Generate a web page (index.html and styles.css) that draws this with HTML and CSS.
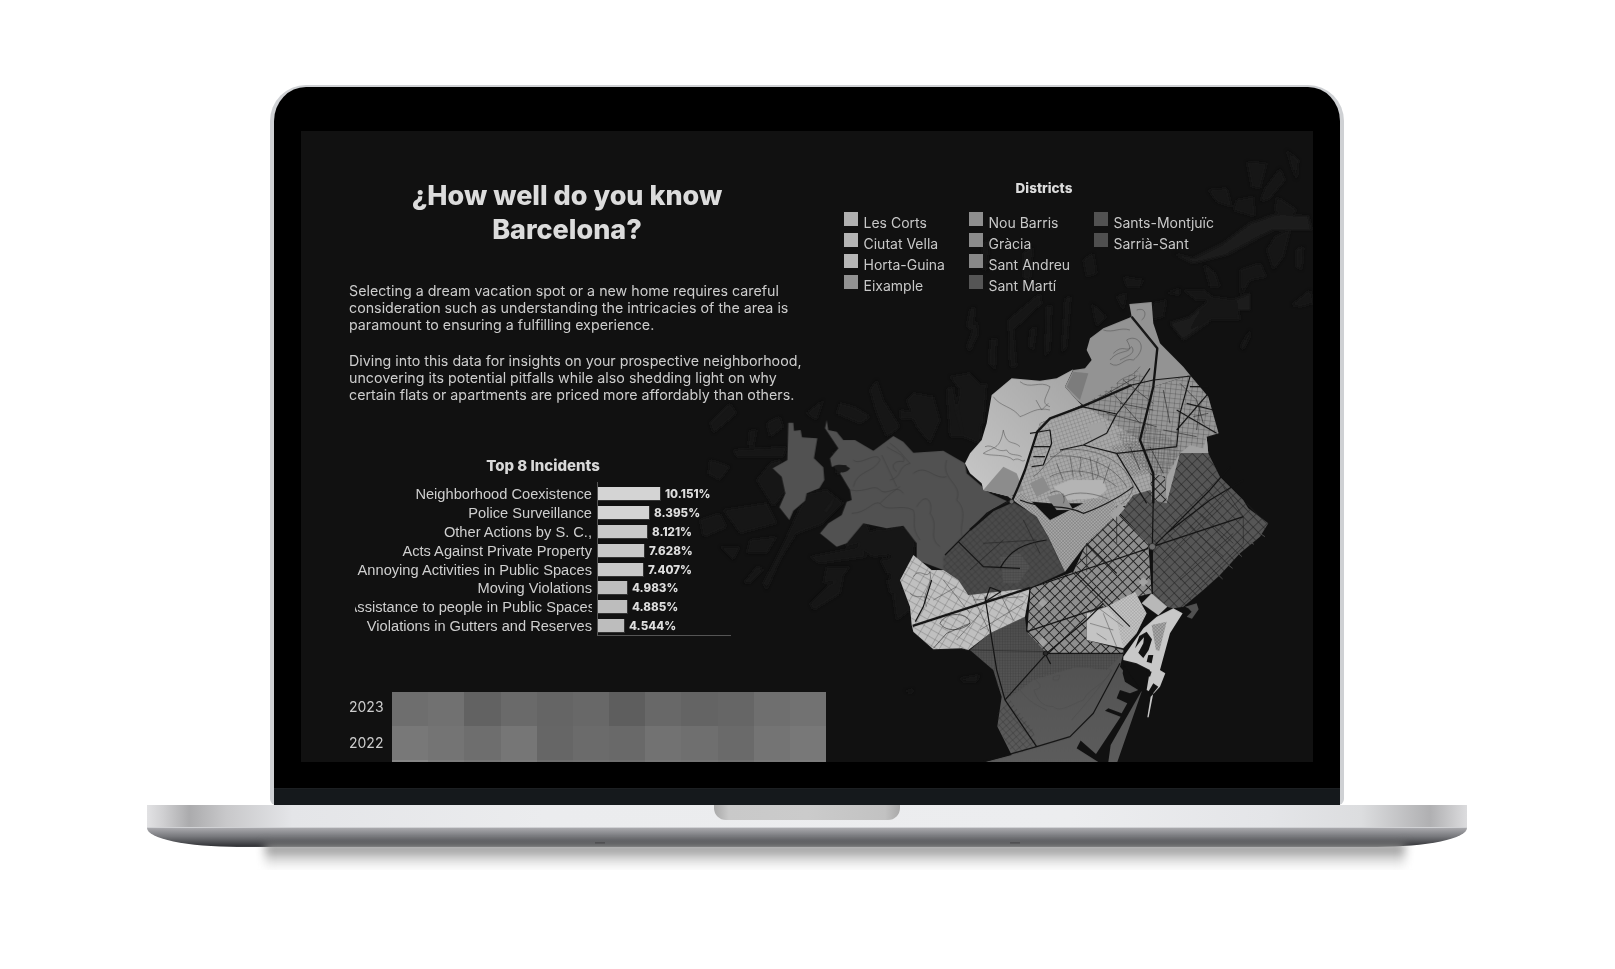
FILE: index.html
```html
<!DOCTYPE html>
<html lang="en">
<head>
  <meta charset="UTF-8" />
  <meta name="viewport" content="width=device-width, initial-scale=1.0"/>
  <title>How well do you know Barcelona?</title>
  <link rel="stylesheet" href="styles.css">
</head>
<body>
  <div class="laptop">
    <div class="lid">
      <div class="screen">

        <!-- map fills the whole screen, viewBox is in page pixels -->
        <svg class="map" viewBox="301 131 1012 631" aria-hidden="true">
          <defs>
            <filter id="soft" x="-5%" y="-5%" width="110%" height="110%"><feGaussianBlur stdDeviation="1.5"/></filter>
            <pattern id="pCross" width="22" height="22" patternUnits="userSpaceOnUse" patternTransform="rotate(-44)">
              <path d="M0 0H22M0 0V22" stroke="#1b1b1b" stroke-width="5" fill="none"/>
            </pattern>
            <pattern id="pMarti" width="22" height="22" patternUnits="userSpaceOnUse" patternTransform="rotate(-44)">
              <path d="M0 0H22M0 0V22" stroke="#1f1f1f" stroke-width="3.4" fill="none"/>
            </pattern>
            <pattern id="pFine" width="7" height="7" patternUnits="userSpaceOnUse" patternTransform="rotate(-44)">
              <path d="M0 0H7M0 0V7" stroke="#5a5a5a" stroke-width="1.5" fill="none"/>
            </pattern>
            <pattern id="pCorts" width="15" height="15" patternUnits="userSpaceOnUse" patternTransform="rotate(-42)">
              <path d="M0 0H15M0 0V15" stroke="#2b2b2b" stroke-width="1.7" fill="none"/>
            </pattern>
            <pattern id="pSants" width="8" height="8" patternUnits="userSpaceOnUse">
              <path d="M0 0H8M0 0V8" stroke="#303030" stroke-width="1.3" fill="none"/>
            </pattern>
            <pattern id="pWest" width="25" height="21" patternUnits="userSpaceOnUse" patternTransform="rotate(30)">
              <path d="M0 0H25M0 0V21" stroke="#4a4a4a" stroke-width="1.6" fill="none"/>
            </pattern>
            <pattern id="pHorta" width="11" height="11" patternUnits="userSpaceOnUse" patternTransform="rotate(-18)">
              <path d="M0 0H11M0 0V11" stroke="#555" stroke-width="1.2" fill="none"/>
            </pattern>
            <pattern id="pNorth" width="16" height="14" patternUnits="userSpaceOnUse" patternTransform="rotate(6)">
              <path d="M0 0H16M0 0V14" stroke="#333" stroke-width="1.5" fill="none"/>
            </pattern>
            <pattern id="pDense" width="9" height="9" patternUnits="userSpaceOnUse" patternTransform="rotate(4)">
              <path d="M0 0H9M0 0V9" stroke="#3a3a3a" stroke-width="1.4" fill="none"/>
            </pattern>
            <linearGradient id="gHorta" x1="0" y1="1" x2="1" y2="0">
              <stop offset="0" stop-color="#c8c8c8"/>
              <stop offset="1" stop-color="#a4a4a4"/>
            </linearGradient>
            <linearGradient id="gBay" x1="0" y1="0" x2="0" y2="1">
              <stop offset="0" stop-color="#4e4e4e"/>
              <stop offset="1" stop-color="#5c5c5c"/>
            </linearGradient>

            <path id="dWest" d="M160 170L205 120 290 40 360 0 440 50 475 110 525 215 420 265 235 285 205 240 160 210Z"/>
            <path id="dEix" d="M410 395L420 265 550 215 590 130 685 40 775 130 785 280 740 290 650 320 590 340 590 420 700 450 700 460 470 460Z"/>
            <path id="dGracia" d="M355 -10L440 50 475 110 525 215 590 130 685 40 670 0 610 -5 480 60 400 -20Z"/>
            <path id="dMarti" d="M690 40L730 -15 780 -30 830 10 870 -140 955 -140 990 -70 1060 0 1075 25 1135 70 1110 110 1050 160 990 225 940 270 880 320 850 325 830 320 785 280 790 140 775 130Z"/>
            <path id="dCorts" d="M30 240L70 165 125 210 160 210 205 240 235 285 420 265 405 350 300 400 235 450 215 445 130 448 70 395 65 375 60 320Z"/>
            <path id="dSants" d="M240 450L300 400 405 350 410 395 470 460 700 460 690 500 755 575 682 786 285 786 365 765 322 680 335 590 310 510Z"/>
            <path id="dHorta" d="M230 520L270 400 400 345 570 450 600 550 610 640 500 650 480 690 400 640 300 640 190 630 220 560Z"/>
            <path id="dNorth" d="M410 180L420 145 460 115 545 80 538 42 605 36 610 100 630 160 700 230 720 255 610 290 590 420 570 450 430 370 400 345 380 330 345 290 370 240 405 235 425 210Z"/>
            <path id="dAndreu" d="M720 255L775 320 806 430 770 440 775 490 690 490 650 640 645 560 600 550 570 450 590 420 610 290Z"/>
          </defs>

          <!-- mountains behind the city -->
          <g class="relief" filter="url(#soft)">
            <g transform="translate(950 290) scale(.3333)">
              <path d="M60 60L75 50 70 120 50 110ZM175 90L270 10 275 40 190 120 200 230 180 230ZM290 50L305 45 300 180 285 200ZM345 25L362 20 350 170 335 190ZM240 120L260 110 250 180 238 170ZM50 170L80 90 85 130 60 185ZM120 150L140 145 135 240 118 220ZM425 40L470 80 440 110ZM0 260L60 250 110 300 80 340 30 300ZM30 300L100 320 90 460 40 440 20 350ZM870 170L900 120 900 140 880 180ZM500 20L530 10 520 60ZM100 -140L120 -150 110 -60 90 -70ZM220 -110L250 -130 240 -30 220 -40ZM400 -90L430 -110 440 -50 410 -40ZM520 -40L580 -30 570 -10 530 -10ZM610 40L650 30 640 80 600 90Z"/>
              <path class="relief-hi" d="M660 100L720 80 790 20 850 30 900 10 900 60 820 60 770 100 700 150Z"/>
            </g>
            <g transform="translate(700 380) scale(.3333)">
              <path d="M30 130L90 70 110 100 40 160ZM100 210L260 200 250 230 110 230ZM150 150L170 150 160 200 145 195ZM210 250L240 240 260 330 220 380 170 300ZM30 240L90 260 60 300 25 280ZM320 340L380 330 430 370 370 430 290 460 240 540 200 630 190 610 230 530 260 470ZM70 390L200 370 230 430 120 460ZM330 530L480 500 500 530 360 550ZM130 610L170 560 190 570 150 610ZM520 450L620 440 650 480 620 520 520 530 470 500ZM510 30L530 0 550 60 600 140 560 170 530 100ZM420 70L460 80 510 110 480 130 410 100ZM620 60L640 40 700 50 720 120 690 190 650 140ZM740 30L760 20 770 90 790 170 750 170ZM830 20L860 10 850 130 810 170 800 130ZM600 90L650 100 660 120 600 115ZM400 215L450 220 440 285 410 280ZM200 130L240 110 250 140 210 170ZM320 100L370 60 350 120ZM380 620L430 590 420 640 340 690 330 670ZM560 600L600 590 610 650 570 640ZM0 420L60 400 80 440 10 470ZM150 480L230 470 200 520 140 520ZM60 500L120 500 100 540ZM430 440L500 430 520 480 440 500ZM540 540L610 530 620 590 560 580ZM380 560L450 560 420 600 370 610Z"/>
            </g>
            <g transform="translate(1160 130) scale(.3333)">
              <path d="M260 95L320 100 300 175 275 170ZM380 60L415 90 410 150 395 110ZM145 180L200 175 215 230 170 215ZM230 210L280 200 285 260 220 240ZM315 175L360 115 375 150 330 205 300 215ZM350 200L410 240 380 280 345 240ZM320 360L345 320 390 300 370 380 340 420ZM240 420L300 400 320 440 270 450 240 500ZM130 400L165 430 180 470 150 470ZM20 490L60 475 60 495ZM70 480L130 480 170 510 110 510ZM110 560L150 500 230 510 240 570 150 570 90 600ZM395 525L450 480 460 520 420 530ZM410 360L430 350 425 420 410 410Z"/>
              <path class="relief-hi" d="M40 370L100 385 190 340 270 280 340 255 445 258 455 300 340 300 300 320 200 375 100 400Z"/>
            </g>
            <g transform="translate(890 500) scale(.3333)">
              <path d="M0 85L30 75 75 120 70 170 30 240 0 260ZM10 290L50 260 60 330 20 360ZM210 535L270 525 260 545 220 545ZM45 572L70 568 65 580Z"/>
            </g>
          </g>

          <!-- city, traced in the coordinates of the lower map crop -->
          <g transform="translate(890 500) scale(.3333)">
            <!-- Sarria, traced from the west -->
            <g transform="translate(-570 -360)">
              <path class="d-sarria" d="M265 128L280 128 282 152 302 150 306 172 352 175 342 235 370 262 373 300 358 325 320 340 315 362 280 392 268 420 238 382 256 340 245 290 218 265 262 240Z"/>
              <path class="d-sarria" d="M380 120L375 145 395 175 415 205 390 235 395 260 440 255 420 280 450 330 455 360 440 365 425 405 385 430 360 460 410 500 440 490 490 430 560 445 610 437 650 490 650 510 650 540 730 570 780 640 1000 640 1000 400 870 340 800 280 795 250 730 212 640 218 610 185 580 168 520 212 465 180 430 180 410 155 385 150Z"/>
              <path class="d-edge" d="M400 258C420 250 440 255 450 265 440 280 415 285 400 258ZM372 392L405 348 395 378 378 398Z"/>
              <path class="contour" d="M545 225L590 320M460 240C480 260 530 210 540 240 520 280 470 270 460 320M600 320C570 340 550 360 540 370 560 400 600 370 640 390 650 420 630 440 660 480M650 380C680 330 700 370 690 400 720 440 680 470 720 500M570 190C600 210 610 230 630 250 590 260 610 290 570 300M740 240C720 300 790 310 770 360 810 400 770 440 790 480M455 400C500 400 520 360 540 370M640 280C680 250 700 300 740 290M560 200C580 215 620 225 610 245 580 240 570 260 590 275M450 330C500 340 520 310 540 330 560 350 590 310 610 340"/>
            </g>
            <use href="#dWest" class="d-west"/>
            <use href="#dWest" fill="url(#pCorts)"/>
            <path class="d-west-dark" d="M330 170L390 160 420 200 385 250 340 250Z"/>
            <path fill="url(#pSants)" d="M330 170L390 160 420 200 385 250 340 250Z"/>

            <!-- north and centre -->
            <g transform="translate(180 -630)">
              <path fill="url(#gHorta)" d="M45 520L60 490 95 450 110 400 125 315 185 265 270 272 320 265 370 238 345 290 380 330 395 345 270 400 235 520 205 590 180 620 100 600 95 580 60 550Z"/>
              <path class="contour-dark" d="M130 320C150 350 190 350 210 380 240 370 260 350 300 360M100 490C130 470 150 480 160 420 170 470 190 450 210 470M100 490C120 500 170 490 190 510 210 500 215 520 225 510M210 275C240 300 270 270 300 290 290 320 270 340 300 350M105 470C130 460 140 490 170 480 180 500 200 490 215 500M258 330L275 360 295 340"/>

              <use href="#dAndreu" class="d-andreu"/>
              <use href="#dAndreu" fill="url(#pNorth)"/>
              <path class="d-andreu-light" d="M690 490L720 465 760 475 770 440 775 490ZM645 640L650 560 690 490 700 490 660 640Z"/>
              <use href="#dNorth" class="d-north"/>
              <path class="d-chunk" d="M350 290L370 245 415 250 390 330Z"/>
              <path fill="url(#pNorth)" d="M470 300L560 240 610 290 590 420 570 450 430 370 400 345Z"/>
              <path class="contour-dark" d="M480 210C510 170 560 200 530 150 560 130 600 170 550 210 520 200 510 240 480 220M500 280C530 250 540 270 570 230M560 60C590 50 590 80 575 90M460 120C490 130 510 110 540 120M490 190C520 160 530 190 545 170 560 190 530 200 510 210"/>

              <use href="#dHorta" class="d-horta"/>
              <use href="#dHorta" fill="url(#pHorta)"/>
              <path fill="url(#pDense)" d="M500 430L600 400 680 460 690 490 650 550 600 550 540 500Z"/>
              <path class="d-hill" d="M310 590L360 570 460 570 470 600 440 625 350 630Z"/>
              <path class="d-hill-mid" d="M130 565L160 530 200 550 220 600 180 620 100 600Z"/>
              <path class="d-hill-mid" d="M240 580L280 560 300 600 260 620ZM290 620L340 610 370 660 320 660Z"/>
              <path class="d-hill-park" d="M410 405L460 395 480 440 430 455Z"/>
              <path fill="url(#pFine)" d="M480 470L570 450 600 550 540 560 500 500Z"/>
              <path class="streets" d="M335 480C420 470 520 500 550 590 540 640 480 670 420 660M300 500C380 490 480 510 530 590M300 560C360 530 440 540 500 590M340 620C380 600 440 610 480 630M250 560C280 540 290 510 340 480M420 500L430 570M360 500L370 560M480 520L460 580M320 520L340 570M390 500C400 520 380 540 395 560M445 505C430 530 455 545 440 565M300 610C330 590 350 620 340 640"/>
            </g>

            <use href="#dSants" fill="url(#gBay)"/>
            <path fill="url(#pSants)" d="M240 450L300 400 405 350 410 395 470 460 700 460 650 510 560 500 430 540 390 570 345 600 322 560 310 510Z"/>
            <path fill="url(#pCorts)" d="M322 640L360 600 430 690 440 740 370 765 322 680Z"/>
            <path class="contour-dark" d="M432 530C470 510 520 510 560 500 620 500 650 500 665 510 640 560 600 560 580 600 550 610 510 640 490 620 450 620 440 590 432 570 470 560 440 550 432 530ZM390 570C420 610 450 620 470 630M490 530L510 525 505 540 490 540ZM545 660C580 620 640 550 665 510"/>

            <use href="#dGracia" class="d-gracia"/>
            <use href="#dGracia" fill="url(#pFine)"/>
            <use href="#dMarti" class="d-marti"/>
            <use href="#dMarti" fill="url(#pMarti)"/>
            <path class="d-eix" d="M780 -80L825 -70 830 10 785 0Z"/>
            <path fill="url(#pCross)" d="M780 -80L825 -70 830 10 785 0Z"/>
            <use href="#dEix" class="d-eix"/>
            <use href="#dEix" fill="url(#pCross)"/>
            <path class="d-hill-park" d="M445 308L458 295 472 308 458 322ZM445 425L458 412 472 425 458 440ZM745 245L760 232 775 245 760 260ZM660 45L690 10 705 25 675 60Z"/>

            <use href="#dCorts" class="d-corts"/>
            <use href="#dCorts" fill="url(#pWest)"/>
            <path class="streets" d="M70 230C90 200 110 240 120 215 130 260 90 280 110 320M60 280C80 300 100 280 120 300M160 240L240 340M130 300L200 260M200 420L280 330M240 270L300 400M330 280L370 360M250 300L400 290M270 390L400 310"/>

            <!-- old town, park and port -->
            <path class="d-old" d="M590 340L650 320 735 275 770 340 740 400 700 445 590 420Z"/>
            <path fill="url(#pFine)" opacity=".55" d="M650 320L735 275 770 340 740 400 700 445 680 360Z"/>
            <path class="contour-dark" d="M620 400L650 420M640 340L680 440M600 370L670 390M620 320L700 380"/>
            <path class="d-park" d="M755 310L785 280 832 320 805 346Z"/>
            <path class="d-port" d="M700 470L760 385 800 350 850 325 878 340 840 400 810 510 826 520 810 560 782 590 772 652 776 652 790 580 770 570 780 510 740 490 700 480Z"/>
            <path class="d-dock" d="M785 375L830 365 808 452 798 450Z"/>
            <path fill="url(#pFine)" d="M785 375L830 365 808 452 798 450Z"/>
            <path class="d-sea" d="M735 445L748 408 770 395 786 418 776 450 760 474 745 458 760 430 762 412 750 425ZM775 465L790 465 785 490 770 485ZM770 510L785 515 780 530 770 525ZM790 550L805 560 785 585 775 575Z"/>
            <path class="d-sarria" d="M885 320L920 310 926 328 906 356 890 350 905 335 895 325Z"/>
            <path class="d-sea" d="M702 495L755 572 662 735 655 786 625 786 560 745 572 722 618 762 692 650 645 632 655 625 695 640 712 610 680 595 690 570 720 580 745 570 705 545 698 520Z"/>
            <path d="M985 225L998 237M1015 195L1028 205M1045 160L1056 170M1078 125L1092 133M1110 100L1125 110" stroke="#4e4e4e" stroke-width="3" fill="none"/>

            <!-- main roads -->
            <g class="roads">
              <path class="r-heavy" d="M68 378L420 264"/>
              <path class="r-main" d="M420 264L775 145"/>
              <path class="r-main" d="M165 165L205 125 290 40 360 0"/>
              <path class="r-main" d="M790 -10L787 140 787 282"/>
              <path class="r-main" d="M830 100L960 0 1060 -60M787 140L1060 50M790 140L960 -30 1020 -100"/>
              <path class="r-main" d="M470 460L700 460M410 395L420 265M410 395L640 320"/>
              <path class="r-main" d="M470 460L590 360 640 310M555 215L720 380M590 130L680 220"/>
              <path class="r-main" d="M465 460L482 492"/>
              <path class="r-main" d="M285 290L320 510 345 600 440 740"/>
              <path class="r-main" d="M300 262L285 305 332 275 300 262M345 600L470 460M125 240L100 320 76 365"/>
              <path class="r-main" d="M280 785L440 740 540 710 610 640 690 490"/>
              <path class="r-main" d="M205 125L280 200 390 205M330 205C360 150 400 130 470 120"/>
              <path class="r-thin" d="M240 450L470 455M130 445L170 400 240 370M150 370C170 400 220 390 240 370 240 340 170 330 150 370M590 130L590 215M680 50L680 130M600 340L640 310M280 130L440 120M240 210L340 120M400 60L450 160"/>
              <path class="r-thin" d="M880 300L1060 130 1060 50 1000 -40M1000 170L900 80M820 180L1000 0M1070 10L1130 70M870 240L1030 100M930 40L1030 130"/>
            </g>
            <g class="roads" transform="translate(180 -630)">
              <path class="r-heavy" d="M60 720L130 660 185 635 205 590 225 540 262 425 300 385 395 350 460 322 545 285"/>
              <path class="r-main" d="M545 285L610 270 725 258"/>
              <path class="r-heavy" d="M545 80L622 175 610 290 570 450 610 550 610 640"/>
              <path class="r-thin" d="M538 74L616 168"/>
              <path class="r-main" d="M395 350L500 372 570 280 600 235M470 430L500 372M330 480L400 465 470 430M400 465L500 490 680 470M500 490L590 640M720 260L690 370 680 470M775 310L680 420M680 360L800 430M720 290L775 290M710 340L790 360"/>
              <path class="r-main" d="M240 430L300 420 305 460 280 525 245 530M250 470H300M250 500H285"/>
              <path class="r-main" d="M210 630C280 660 340 640 400 670 430 660 500 630 550 590"/>
              <path class="r-thin" d="M640 300L660 400M640 420L740 440M690 280L740 330 760 400M510 340L610 360M470 370L620 410M480 300L570 400M520 270L610 340M420 340L560 260M600 470L640 550M540 470L570 540M750 340L740 420M775 370L730 380"/>
            </g>
            <circle class="hub" cx="787" cy="140" r="10"/>
            <circle class="hub-dark" cx="467" cy="460" r="7"/>
            <circle class="hub" cx="365" cy="5" r="7"/>
          </g>
        </svg>

        <div class="panel-left">
          <h1 class="title">¿How well do you know<br>Barcelona?</h1>
          <p class="intro">Selecting a dream vacation spot or a new home requires careful<br>consideration such as understanding the intricacies of the area is<br>paramount to ensuring a fulfilling experience.</p>
          <p class="intro">Diving into this data for insights on your prospective neighborhood,<br>uncovering its potential pitfalls while also shedding light on why<br>certain flats or apartments are priced more affordably than others.</p>

          <h2 class="chart-title">Top 8 Incidents</h2>
          <div class="chart">
            <div class="chart-row"><span class="chart-label"><span>Neighborhood Coexistence</span></span><span class="bar bar-1" style="width:63px"></span><b class="chart-value">10.151%</b></div>
            <div class="chart-row"><span class="chart-label"><span>Police Surveillance</span></span><span class="bar bar-1" style="width:52px"></span><b class="chart-value">8.395%</b></div>
            <div class="chart-row"><span class="chart-label"><span>Other Actions by S. C.,</span></span><span class="bar bar-2" style="width:50px"></span><b class="chart-value">8.121%</b></div>
            <div class="chart-row"><span class="chart-label"><span>Acts Against Private Property</span></span><span class="bar bar-2" style="width:47px"></span><b class="chart-value">7.628%</b></div>
            <div class="chart-row"><span class="chart-label"><span>Annoying Activities in Public Spaces</span></span><span class="bar bar-2" style="width:46px"></span><b class="chart-value">7.407%</b></div>
            <div class="chart-row"><span class="chart-label"><span>Moving Violations</span></span><span class="bar bar-3" style="width:30px"></span><b class="chart-value">4.983%</b></div>
            <div class="chart-row"><span class="chart-label label-cut"><span>Assistance to people in Public Spaces</span></span><span class="bar bar-3" style="width:30px"></span><b class="chart-value">4.885%</b></div>
            <div class="chart-row"><span class="chart-label"><span>Violations in Gutters and Reserves</span></span><span class="bar bar-3" style="width:27px"></span><b class="chart-value">4.544%</b></div>
          </div>

          <div class="heat">
            <div class="heat-years">
              <span>2023</span>
              <span>2022</span>
            </div>
            <div class="heat-grid">
              <i style="background:#6e6e6e"></i><i style="background:#717171"></i><i style="background:#626262"></i><i style="background:#6a6a6a"></i><i style="background:#656565"></i><i style="background:#686868"></i><i style="background:#5e5e5e"></i><i style="background:#686868"></i><i style="background:#646464"></i><i style="background:#666666"></i><i style="background:#6f6f6f"></i><i style="background:#727272"></i>
              <i style="background:#787878"></i><i style="background:#747474"></i><i style="background:#6e6e6e"></i><i style="background:#767676"></i><i style="background:#666666"></i><i style="background:#6b6b6b"></i><i style="background:#696969"></i><i style="background:#727272"></i><i style="background:#6f6f6f"></i><i style="background:#6a6a6a"></i><i style="background:#747474"></i><i style="background:#787878"></i>
              <i style="background:#868686"></i><i style="background:#7c7c7c"></i><i style="background:#767676"></i><i style="background:#7a7a7a"></i><i style="background:#6e6e6e"></i><i style="background:#707070"></i><i style="background:#6e6e6e"></i><i style="background:#767676"></i><i style="background:#747474"></i><i style="background:#707070"></i><i style="background:#787878"></i><i style="background:#7c7c7c"></i>
            </div>
          </div>
        </div>

        <div class="panel-right">
          <h2 class="legend-title">Districts</h2>
          <ul class="legend">
            <li><i class="swatch" style="background:#b0b0b0"></i>Les Corts</li>
            <li><i class="swatch" style="background:#b4b4b4"></i>Ciutat Vella</li>
            <li><i class="swatch" style="background:#b6b6b6"></i>Horta-Guina</li>
            <li><i class="swatch" style="background:#929292"></i>Eixample</li>
            <li><i class="swatch" style="background:#8e8e8e"></i>Nou Barris</li>
            <li><i class="swatch" style="background:#8b8b8b"></i>Gràcia</li>
            <li><i class="swatch" style="background:#888888"></i>Sant Andreu</li>
            <li><i class="swatch" style="background:#555555"></i>Sant Martí</li>
            <li><i class="swatch" style="background:#525252"></i>Sants-Montjuïc</li>
            <li><i class="swatch" style="background:#4f4f4f"></i>Sarrià-Sant</li>
          </ul>
        </div>
      </div>
      <div class="chin"></div>
    </div>

    <div class="base">
      <div class="base-top"><div class="notch"></div></div>
      <div class="base-front"><span class="slit"></span><span class="slit"></span></div>
    </div>
    <div class="base-shadow"></div>
  </div>
</body>
</html>
```
FILE: styles.css
```css
* {
  box-sizing: border-box;
}

body {
  margin: 0;
  padding: 85px 0 0;
  background: #fff;
  color: #d0d0d0;
  font-family: "Inter", "Liberation Sans", sans-serif;
  overflow: hidden;
}

.laptop {
  width: 1320px;
  margin-left: 147px;
}

/* LID */
.lid {
  width: 1074px;
  height: 720px;
  margin-left: 123px;
  padding: 44px 27px 0;
  background: #000;
  border: solid #cfd1d4;
  border-width: 2px 4px 0;
  border-radius: 36px 36px 6px 6px;
  display: flex;
  flex-direction: column;
}

.screen {
  position: relative;
  flex: none;
  width: 1012px;
  height: 631px;
  background: #111;
  overflow: hidden;
  display: flex;
  filter: blur(0.35px);
}

.chin {
  flex: none;
  height: 17px;
  margin: 26px -27px 0;
  background: #15191c;
  border-top: 1px solid #1c1f22;
}

/* MAP */
.map {
  position: absolute;
  top: 0;
  left: 0;
  width: 1012px;
  height: 631px;
}

.relief path { fill: #161616; }
.relief .relief-hi { fill: #1d1d1d; }

.d-sarria { fill: #515151; }
.d-edge { fill: #1a1a1a; }
.d-west { fill: #4b4b4b; }
.d-west-dark { fill: #555; }
.d-andreu { fill: #969696; }
.d-andreu-light { fill: #a2a2a2; }
.d-north { fill: #939393; }
.d-chunk { fill: #7c7c7c; }
.d-horta { fill: #a8a8a8; }
.d-hill { fill: #b4b4b4; }
.d-hill-mid { fill: #8c8c8c; }
.d-hill-park { fill: #a2a2a2; }
.d-gracia { fill: #a8a8a8; }
.d-marti { fill: #565656; }
.d-eix { fill: #8e8e8e; }
.d-corts { fill: #c0c0c0; }
.d-old { fill: #c4c4c4; }
.d-park { fill: #b8b8b8; }
.d-port { fill: #c8c8c8; }
.d-dock { fill: #a8a8a8; }
.d-sea { fill: #111; }

.hub { fill: #6e6e6e; stroke: #1a1a1a; stroke-width: 2; }
.hub-dark { fill: #2a2a2a; stroke: #131313; stroke-width: 3; }

.contour,
.contour-dark,
.streets {
  fill: none;
  stroke-width: 1.5;
}
.contour { stroke: #3a3a3a; }
.contour-dark { stroke: #4a4a4a; }
.streets { stroke: #3a3a3a; stroke-width: 1.5; }

.roads path {
  fill: none;
  stroke: #131313;
  stroke-linejoin: round;
}
.roads .r-heavy { stroke-width: 7; }
.roads .r-main { stroke-width: 3.6; }
.roads .r-thin { stroke-width: 1.9; stroke: #262626; }

/* LEFT SIDE */
.panel-left {
  position: relative;
  width: 543px;
  padding-left: 48px;
}

.title {
  width: 436px;
  margin: 48px 0 0;
  font-size: 27px;
  font-weight: 800;
  line-height: 34px;
  text-align: center;
  color: #dcdcdc;
}

.intro {
  width: 470px;
  margin: 0;
  font-size: 14.25px;
  line-height: 17px;
  color: #cdcdcd;
}

.title + .intro {
  margin-top: 35px;
}

.intro + .intro {
  margin-top: 19px;
}

.chart-title {
  width: 388px;
  margin: 54px 0 7px;
  font-size: 15px;
  font-weight: 800;
  line-height: 18px;
  text-align: center;
  color: #d8d8d8;
}

.chart {
  width: 382px;
  margin-left: 6px;
  padding: 3px 0 1px;
  background:
    linear-gradient(#555, #555) 242px 0 / 1px 100% no-repeat,
    linear-gradient(#555, #555) 242px 100% / 134px 1px no-repeat;
}

.chart-row {
  display: flex;
  align-items: center;
  height: 18.8px;
}

.chart-label {
  display: flex;
  justify-content: flex-end;
  flex: none;
  width: 237px;
  margin-right: 6px;
  overflow: hidden;
  font-family: "Liberation Sans", Arial, sans-serif;
  font-size: 14.65px;
  white-space: nowrap;
  color: #cfcfcf;
}

.chart-label span {
  flex: none;
}

.label-cut span {
  margin-right: -3px;
}

.bar {
  flex: none;
  height: 14px;
  margin-right: 4px;
  border: solid #333;
  border-width: 0 1px 1px 0;
}

.bar-1 { background: #d4d4d4; }
.bar-2 { background: #c8c8c8; }
.bar-3 { background: #bdbdbd; }

.chart-value {
  font-size: 11.6px;
  font-weight: 800;
  color: #dedede;
}

.heat {
  display: flex;
  margin-top: 56px;
}

.heat-years {
  flex: none;
  width: 43px;
  display: flex;
  flex-direction: column;
  font-size: 14px;
  color: #cdcdcd;
}

.heat-years span {
  height: 34px;
  line-height: 30px;
  margin-bottom: 2px;
}

.heat-grid {
  flex: none;
  width: 434px;
  display: grid;
  grid-template-columns: repeat(12, 1fr);
  grid-auto-rows: 34px;
}

/* RIGHT SIDE */
.panel-right {
  position: relative;
  width: 400px;
  padding-top: 48px;
}

.legend-title {
  margin: 0 0 15px;
  font-size: 13.5px;
  font-weight: 800;
  line-height: 18px;
  text-align: center;
  color: #dcdcdc;
}

.legend {
  display: grid;
  grid-template-rows: repeat(4, 21px);
  grid-template-columns: repeat(3, 125px);
  grid-auto-flow: column;
  margin: 0;
  padding: 0;
  list-style: none;
  font-size: 14px;
  line-height: 21px;
  color: #c8c8c8;
}

.legend li {
  display: flex;
}

.swatch {
  flex: none;
  width: 13.5px;
  height: 14px;
  margin-right: 6px;
}

/* BASE */
.base {
  width: 1320px;
}

.base-top {
  height: 23px;
  display: flex;
  justify-content: center;
  background: linear-gradient(90deg, #e2e2e4 0, #d0d0d2 1.2%, #ababad 3.2%, #c8c8ca 6%, #e4e5e8 11%, #ebecee 30%, #ecedef 70%, #e4e5e8 85%, #dcdddf 92%, #b0b0b2 97.2%, #dcdcde 100%);
  border-bottom: 1px solid #d0d1d4;
}

.notch {
  width: 186px;
  height: 15px;
  background: linear-gradient(90deg, #a9a9a9, #c9c9c9 8%, #cbcbcb 50%, #c2c2c2 92%, #a9a9a9);
  border-radius: 0 0 12px 12px;
}

.base-front {
  height: 19px;
  padding-top: 14px;
  display: flex;
  justify-content: center;
  gap: 405px;
  background: linear-gradient(#a9a9ad, #77787c 45%, #37383c 92%, #444549);
  border-radius: 0 0 90px 90px / 0 0 19px 19px;
}

.slit {
  width: 10px;
  height: 2px;
  background: #2d2d30;
}

.base-shadow {
  width: 1140px;
  height: 26px;
  margin: -3px 0 0 118px;
  background: linear-gradient(#6f6f6f, #bcbcbc 35%, #efefef 75%, #fff);
  filter: blur(5px);
}
```
